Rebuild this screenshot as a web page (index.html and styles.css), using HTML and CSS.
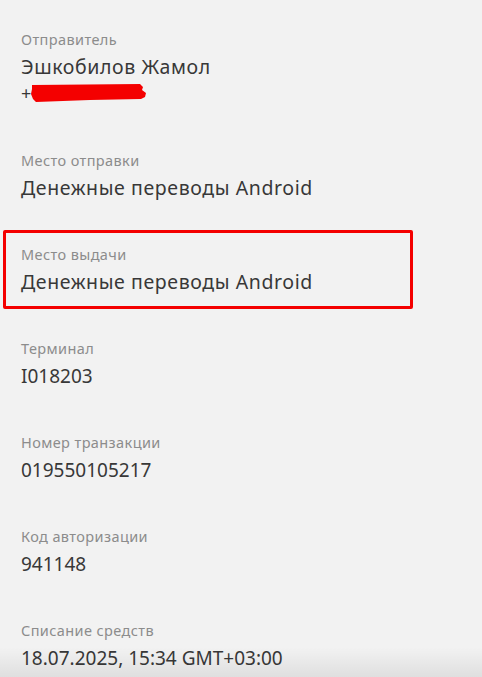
FILE: index.html
```html
<!DOCTYPE html>
<html>
<head>
    <title>Детали перевода</title>
    <link rel="stylesheet" href="styles.css">
</head>
<body>
    <div class="screen">
        <div class="details">
            <div class="detail first">
                <div class="detail-label">Отправитель</div>
                <div class="detail-value words">Эшкобилов Жамол</div>
                <div class="detail-phone">
                    <span class="plus">+</span>
                    <svg class="scribble" width="118" height="20" viewBox="0 0 118 20">
                        <path d="M2 2 L110 1 L113 4 L112 7 L116 10 L115 14 L111 16 L60 17 L6 19 L3 16 L1 11 L2 6 Z" fill="#f40000"/>
                    </svg>
                </div>
            </div>

            <div class="detail">
                <div class="detail-label">Место отправки</div>
                <div class="detail-value words">Денежные переводы Android</div>
            </div>

            <div class="detail marked">
                <div class="detail-label">Место выдачи</div>
                <div class="detail-value words">Денежные переводы Android</div>
            </div>

            <div class="detail">
                <div class="detail-label">Терминал</div>
                <div class="detail-value">I018203</div>
            </div>

            <div class="detail">
                <div class="detail-label">Номер транзакции</div>
                <div class="detail-value">019550105217</div>
            </div>

            <div class="detail">
                <div class="detail-label">Код авторизации</div>
                <div class="detail-value">941148</div>
            </div>

            <div class="detail">
                <div class="detail-label">Списание средств</div>
                <div class="detail-value">18.07.2025, 15:34 GMT+03:00</div>
            </div>
        </div>
        <div class="bottom-shade"></div>
    </div>
</body>
</html>
```

FILE: styles.css
```css
html, body {
    margin: 0;
    padding: 0;
    background-color: #f2f2f2;
}
body {
    font-family: "Noto Sans", "Open Sans", sans-serif;
    color: #383838;
}
.screen {
    position: relative;
    height: 677px;
    overflow: hidden;
}
.details {
    padding-top: 8px;
}
.detail {
    padding: 19px 21px;
}
.detail.first {
    padding-bottom: 26px;
}
.detail-label {
    font-size: 14.5px;
    line-height: 24px;
    letter-spacing: 0.4px;
    color: #8c8c8c;
}
.detail-value {
    font-size: 19px;
    line-height: 32px;
    color: #383838;
}
.detail-value.words {
    font-size: 19.5px;
    letter-spacing: 0.6px;
}
.detail-phone {
    display: flex;
    align-items: center;
    height: 20px;
    font-size: 18px;
}
.plus {
    color: #383838;
    margin-right: -1px;
}
.scribble {
    display: block;
}
.detail.marked {
    margin: 7px 69px 8px 3px;
    border: 3px solid #f40000;
    border-radius: 2px;
    padding: 9px 15px 8px;
}
.bottom-shade {
    position: absolute;
    left: 0;
    right: 0;
    bottom: 0;
    height: 30px;
    background: linear-gradient(rgba(0,0,0,0), rgba(0,0,0,0.08));
}
```
